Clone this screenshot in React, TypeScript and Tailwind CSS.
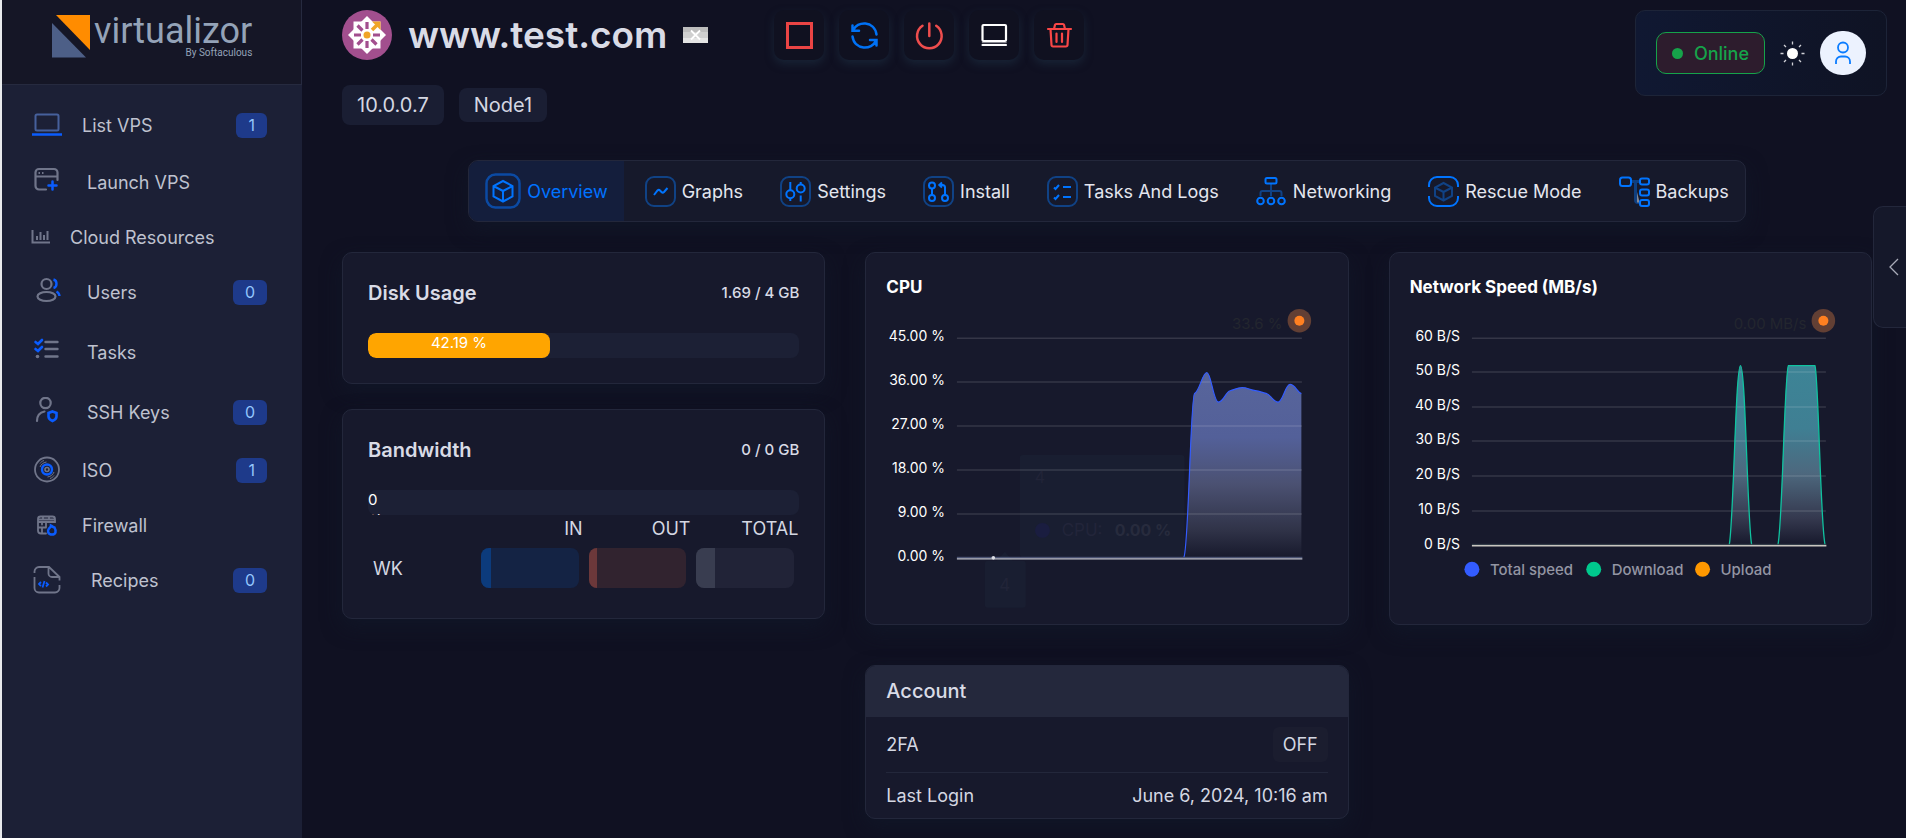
// App.tsx
// VPS detail page: sidebar, power controls, section tabs and the overview cards.

import { useState, type ReactNode } from 'react';
import clsx from 'clsx';

interface NavItem {
  label: string;
  height: string;
  gap: string;
  count?: number;
  icon: ReactNode;
}

const GREY = '#70758a';
const BLUE = '#0a5cff';

const NAV_ITEMS: NavItem[] = [
  {
    label: 'List VPS',
    height: 'h-14',
    gap: 'pl-5',
    count: 1,
    icon: (
      <>
        <rect x="5.5" y="4.5" width="23" height="16" rx="1.5" stroke="#46609c" strokeWidth="2" />
        <path d="M2 24.5h30" stroke={BLUE} strokeWidth="2.5" />
      </>
    ),
  },
  {
    label: 'Launch VPS',
    height: 'h-[58px]',
    gap: 'pl-[25px]',
    icon: (
      <>
        <path
          d="M16 22.5H9a3.5 3.5 0 0 1-3.5-3.5V5.5A3.5 3.5 0 0 1 9 2h15a3.5 3.5 0 0 1 3.5 3.5V13M5.5 9.5h22"
          stroke={GREY}
          strokeWidth="2.2"
          strokeLinecap="round"
        />
        <path d="M8.5 6h1.5M12 6h1.5" stroke={GREY} strokeWidth="2" />
        <path d="M22.5 14.5v8M18.5 18.5h8" stroke={BLUE} strokeWidth="2.5" strokeLinecap="round" />
      </>
    ),
  },
  {
    label: 'Cloud Resources',
    height: 'h-13',
    gap: 'pl-2',
    icon: (
      <path d="M2.5 8v12.5h17.5M7 14v4M10.500 10v8M14 13v5M17.5 9v9" stroke={GREY} strokeWidth="2" />
    ),
  },
  {
    label: 'Users',
    height: 'h-[58px]',
    gap: 'pl-[25px]',
    count: 0,
    icon: (
      <>
        <circle cx="16.5" cy="7" r="5" stroke={GREY} strokeWidth="2.2" />
        <ellipse cx="16.5" cy="19.5" rx="9" ry="4.5" stroke={GREY} strokeWidth="2.2" />
        <path d="M23.5 2.5c4 1 4 7.5 0 8.5M26.5 14.5c2 1 2.8 2.5 3 4.5" stroke={BLUE} strokeWidth="2.4" />
      </>
    ),
  },
  {
    label: 'Tasks',
    height: 'h-[62px]',
    gap: 'pl-[25px]',
    icon: (
      <>
        <path d="M15.5 5h12M15.5 12h12M15.5 19.5h12" stroke={GREY} strokeWidth="2.4" strokeLinecap="round" />
        <circle cx="7.5" cy="19.5" r="1.8" fill={GREY} />
        <path d="M5.5 5l2.5 2 4-4M5.500 12l2.500 2 4-4" stroke={BLUE} strokeWidth="2.6" strokeLinecap="round" />
      </>
    ),
  },
  {
    label: 'SSH Keys',
    height: 'h-[58px]',
    gap: 'pl-[25px]',
    count: 0,
    icon: (
      <>
        <circle cx="15.5" cy="6" r="5.2" stroke={GREY} strokeWidth="2.2" />
        <path d="M7 24c0-5.5 2.5-8.500 7.500-9.500" stroke={GREY} strokeWidth="2.2" strokeLinecap="round" />
        <path d="M22.5 14.5l4 1.5v3.5c0 2-1.5 3.5-4 4.5-2.5-1-4-2.5-4-4.5V16z" stroke={BLUE} strokeWidth="2.6" />
      </>
    ),
  },
  {
    label: 'ISO',
    height: 'h-[58px]',
    gap: 'pl-5',
    count: 1,
    icon: (
      <>
        <circle cx="17" cy="14.5" r="12" stroke={GREY} strokeWidth="1.8" />
        <circle cx="17" cy="14.5" r="5" stroke={BLUE} strokeWidth="2.4" />
        <circle cx="17" cy="14.5" r="2" stroke={GREY} strokeWidth="1.6" />
        <path
          d="M10 12c1-2.500 3-4.500 6.500-5M10 8.500c1-1.500 2-2.300 4-3M24 17c-1 2.500-3 4.500-6.500 5M24 20.500c-1 1.500-2 2.300-4 3"
          stroke={GREY}
        />
      </>
    ),
  },
  {
    label: 'Firewall',
    height: 'h-13',
    gap: 'pl-5',
    icon: (
      <>
        <path
          d="M16 23.5h-5a3 3 0 0 1-3-3V9a2.500 2.500 0 0 1 2.500-2.500h12A2.500 2.500 0 0 1 25 9v3H8M13 6.500v2.500M19 6.500v2.500M8 9.500h17M16 12v5M8 17.500h8M12 17.500v5M12 13v1.500"
          stroke={GREY}
          strokeWidth="1.8"
          strokeLinecap="round"
        />
        <path d="M21 15.5c2 1 2 2 3.5 2 2 3.5 1.5 7-2.5 7s-5-3.500-3-6c1-.8 2-1.500 2-3z" stroke={BLUE} strokeWidth="2.5" />
      </>
    ),
  },
  {
    label: 'Recipes',
    height: 'h-[58px]',
    gap: 'pl-[29px]',
    count: 0,
    icon: (
      <>
        <path
          d="M4.5 8V6.5a4.5 4.5 0 0 1 4.5-4.500h10l10.500 10v3.500M29.500 20v3a4.500 4.500 0 0 1-4.500 4.500H9a4.500 4.500 0 0 1-4.500-4.500V12M18.500 2.500v6a3.500 3.500 0 0 0 3.500 3.500h7"
          stroke={GREY}
          strokeWidth="1.8"
        />
        <path d="M11 17l-2 2 2 2M16 17.500l2 2-2 2M14.500 16l-2 6.500" stroke={BLUE} strokeWidth="1.8" />
      </>
    ),
  },
];

const POWER_ACTIONS: { label: string; color: string; icon: ReactNode }[] = [
  { label: 'Stop', color: 'text-[#ea4444]', icon: <rect x="3.5" y="3.5" width="24" height="24" strokeWidth="3" /> },
  {
    label: 'Restart',
    color: 'text-[#0072f5]',
    icon: (
      <>
        <path d="M3.500 5.500v5.300h6.500M4 10.500C8 .5 25.500.5 27.500 14.500" strokeWidth="2.5" />
        <path d="M27.500 25.500v-5.500h-6.500M27 20.500C23 30.500 5.500 30.500 3.500 16.500" strokeWidth="2.5" />
      </>
    ),
  },
  {
    label: 'Power off',
    color: 'text-[#ee4d4d]',
    icon: <path d="M15.300 3.500v12.500M8.500 5.800a12.300 12.300 0 1 0 13.700 0" strokeWidth="2.5" />,
  },
  {
    label: 'Console',
    color: 'text-white',
    icon: (
      <>
        <rect x="3.5" y="5" width="23.5" height="16" rx="1" strokeWidth="2.2" />
        <path d="M3.500 25h23.500" strokeWidth="2.2" />
        <path d="M3.500 22.500h23.500" strokeWidth="1.5" opacity="0.5" />
      </>
    ),
  },
  {
    label: 'Delete',
    color: 'text-[#f94646]',
    icon: (
      <path
        d="M4 9h23M6.500 9l1 16a1.500 1.500 0 0 0 1.500 1.500h13a1.500 1.500 0 0 0 1.500-1.500l1-16M10 9l1-4.200a1.200 1.200 0 0 1 1.200-.8h6.600a1.200 1.200 0 0 1 1.200.8L21 9M12.500 13.500v8.500M18 13.500v8.500"
        strokeWidth="2.2"
      />
    ),
  },
];

const FRAME = <rect x="1" y="1" width="29" height="29" rx="8" stroke="#104285" strokeWidth="2" />;

const TABS: { label: string; icon: ReactNode; size?: number }[] = [
  {
    label: 'Overview',
    size: 36,
    icon: (
      <>
        <rect x="1.5" y="1.5" width="33" height="33" rx="9" stroke="#0b4aa3" strokeWidth="2.5" />
        <path d="M18 8l9.500 5v10.500L18 28.500l-9.500-5V13zM8.500 13L18 18l9.500-5M18 18v10.500" />
      </>
    ),
  },
  {
    label: 'Graphs',
    icon: (
      <>
        {FRAME}
        <path d="M9 19l3.500-4.500c1-1 1.500-1 2.500 0l1.500 1.500c1 1 1.500 1 2.500 0L22.500 12" />
      </>
    ),
  },
  {
    label: 'Settings',
    icon: (
      <>
        {FRAME}
        <path d="M10.300 6v8M10.300 22.500v2.500M20.700 6v3M20.700 19.500v6" />
        <circle cx="10.3" cy="18.3" r="4" />
        <circle cx="20.7" cy="12.5" r="4" />
      </>
    ),
  },
  {
    label: 'Install',
    icon: (
      <>
        {FRAME}
        <circle cx="9" cy="9.5" r="3" />
        <circle cx="9" cy="22" r="3" />
        <circle cx="22" cy="22" r="3" />
        <path d="M9 12.500v6.500M22 19v-7.500a2.500 2.500 0 0 0-2.500-2.500H16.500M19 6.500L16.300 9l2.700 2.500" />
      </>
    ),
  },
  {
    label: 'Tasks And Logs',
    icon: (
      <>
        {FRAME}
        <path d="M7 11.500l1.500 1.500 3.500-4M7 21.500l1.500 1.500 3.500-4M16 11h8M16 21h8" />
      </>
    ),
  },
  {
    label: 'Networking',
    icon: (
      <>
        <path d="M4.500 20v-3a2 2 0 0 1 2-2h17a2 2 0 0 1 2 2v3M15 8v12" stroke="#104285" />
        <rect x="9.5" y="2" width="11" height="5.5" rx="1.5" />
        <circle cx="4.5" cy="25" r="3.3" />
        <circle cx="15" cy="25" r="3.3" />
        <circle cx="25.5" cy="25" r="3.3" />
      </>
    ),
  },
  {
    label: 'Rescue Mode',
    icon: (
      <>
        <path d="M1 11V9a8 8 0 0 1 8-8h13a8 8 0 0 1 8 8v2M30 20v2a8 8 0 0 1-8 8H9a8 8 0 0 1-8-8v-2" />
        <path
          d="M15.500 7l8.500 4.500v8.500L15.500 24.500 7 20v-8.500zM7 11.500l8.500 4.500 8.500-4.500M15.500 16v8.500"
          stroke="#104285"
        />
      </>
    ),
  },
  {
    label: 'Backups',
    icon: (
      <>
        <path d="M12 5.500h8M16.500 5.500v18.500a2.500 2.500 0 0 0 2.500 2.500h1.500" stroke="#0f3f80" strokeWidth="3" />
        <path d="M18 16l2 8v2.500h-2z" fill="#858894" stroke="none" />
        <rect x="1" y="1.5" width="11" height="8.5" rx="2.5" />
        <rect x="21" y="2.5" width="9" height="6" rx="2" />
        <rect x="21" y="13.5" width="9" height="6" rx="2" />
        <rect x="21" y="24" width="9" height="6" rx="2" />
      </>
    ),
  },
];

const TRAFFIC = [
  { label: 'IN', track: 'bg-[#142344]', fill: 'bg-[#0c3b7c]', percent: 10 },
  { label: 'OUT', track: 'bg-[#31232f]', fill: 'bg-[#6c383a]', percent: 9 },
  { label: 'TOTAL', track: 'bg-[#212337]', fill: 'bg-[#393d50]', percent: 19 },
];

const CPU_TICKS = [
  { label: '45.00 %', y: 38 },
  { label: '36.00 %', y: 82 },
  { label: '27.00 %', y: 126 },
  { label: '18.00 %', y: 170 },
  { label: '9.00 %', y: 214 },
  { label: '0.00 %', y: 258 },
];

const NETWORK_TICKS = [
  { label: '60 B/S', y: 38 },
  { label: '50 B/S', y: 72 },
  { label: '40 B/S', y: 107 },
  { label: '30 B/S', y: 141 },
  { label: '20 B/S', y: 176 },
  { label: '10 B/S', y: 211 },
  { label: '0 B/S', y: 246 },
];

const LEGEND = [
  { label: 'Total speed', color: '#335cff', x: 62 },
  { label: 'Download', color: '#00c98d', x: 184 },
  { label: 'Upload', color: '#ff9800', x: 293 },
];

const CPU_LINE =
  'M298.3 257.5C303 250 305 96 309 93.500C314 91 317 72.500 321.300 72.500S328 102 333 102S340 92 344.700 90.700S352 87.500 356.700 87.500S364 89.500 368.700 90.300S376 92 380.700 93.300S388 102 392.700 102S400 84.300 404.700 84.300S412 92 416 93.500';
const NETWORK_LINE =
  'M319.7 245C324 225 326 65.500 331 65.500S338 225 342.200 245M368.500 245C373 225 375 72 379 65.500H405.500C409 72 411 225 415.700 245';

function Card({ className, children }: { className?: string; children: ReactNode }) {
  return (
    <section
      className={clsx(
        'rounded-[10px] border border-[#23273b] bg-[#17192c] shadow-[0_8px_20px_rgba(17,24,42,0.7)]',
        className
      )}
    >
      {children}
    </section>
  );
}

function Sidebar() {
  return (
    <aside className="w-[302px] shrink-0 border-l-2 border-[#e8eaed] bg-[#1c2036]">
      <div className="flex h-[85px] items-start border-r border-b border-[#262a3f] bg-[#151626] pt-[10px] pl-[50px]">
        <svg width="40" height="48" viewBox="0 0 40 48" className="shrink-0">
          <path d="M4 5h34v35z" fill="#ff8c00" />
          <path d="M0 13l34 34.500H0z" fill="#4d5f87" />
        </svg>
        <div className="flex flex-col pt-[2px] font-[Roboto,sans-serif] text-[#94a3b8]">
          <span className="pl-[2px] text-[36px] leading-[38px]">virtualizor</span>
          <span className="text-right text-[10px] leading-[6px]">By Softaculous</span>
        </div>
      </div>
      <nav className="flex flex-col pt-3 pr-[35px] pl-7">
        {NAV_ITEMS.map((item) => (
          <a key={item.label} href="#" className={clsx('flex items-center', item.height)}>
            <svg width="32" height="30" viewBox="0 0 32 30" fill="none" className="shrink-0">
              {item.icon}
            </svg>
            <span className={clsx('flex-1 text-[18px] text-[#bfc2cf]', item.gap)}>{item.label}</span>
            {item.count !== undefined && (
              <span className="rounded-md bg-[#1e3a8a] px-3 text-[16px] leading-[25px] text-[#93c5fd]">{item.count}</span>
            )}
          </a>
        ))}
      </nav>
    </aside>
  );
}

function OsLogo() {
  return (
    <svg width="50" height="50" viewBox="0 0 50 50" className="shrink-0">
      <circle cx="25" cy="25" r="25" fill="#a24f8e" />
      <path d="M11.500 11.500h27v27h-27z" fill="#fff" />
      <path d="M25 6l19 19-19 19L6 25z" fill="#fff" />
      <path d="M30 11.500h8.500V20z" fill="#f0a527" />
      <path
        d="M19 25h-7M31 25h7M25 19v-7M25 31v7M20.500 20.500l-5-5M29.500 29.500l5 5M20.500 29.500l-5 5"
        stroke="#a24f8e"
        strokeWidth="3.2"
      />
      <path d="M30 20l5-5" stroke="#f0a527" strokeWidth="3.5" />
      <circle cx="25" cy="25" r="3.5" fill="#f0a527" />
    </svg>
  );
}

function Header() {
  return (
    <header className="flex items-start justify-between pt-[10px] pr-[19px] pl-10">
      <div>
        <div className="flex items-center">
          <OsLogo />
          <h1 className="pl-4 text-[37px] leading-[50px] font-semibold text-[#d9dbe6]">www.test.com</h1>
          <svg width="25" height="16" viewBox="0 0 25 16" className="ml-4 shrink-0">
            <path d="M0 0h25v5H0z" fill="#bdbdbd" />
            <path d="M0 5h25v6H0z" fill="#cfcfcf" />
            <path d="M0 11h25v5H0z" fill="#e4e4e4" />
            <path d="M8 3.500l9 9M17 3.500l-9 9" stroke="#fff" strokeWidth="1.8" />
          </svg>
          <div className="flex gap-[15px] pl-[66px]">
            {POWER_ACTIONS.map((action) => (
              <button
                key={action.label}
                type="button"
                aria-label={action.label}
                className={clsx(
                  'size-[50px] rounded-[10px] bg-[#101120] p-[10px] shadow-[0_4px_8px_rgba(30,48,66,0.6)]',
                  action.color
                )}
              >
                <svg
                  width="30"
                  height="30"
                  viewBox="0 0 30 30"
                  fill="none"
                  stroke="currentColor"
                  strokeLinecap="round"
                >
                  {action.icon}
                </svg>
              </button>
            ))}
          </div>
        </div>
        <div className="flex items-center gap-[15px] pt-[25px] text-[20px] text-[#d4d7e2]">
          <span className="rounded-lg bg-[#1a1e33] px-[15px] leading-[40px]">10.0.0.7</span>
          <span className="rounded-lg bg-[#1a1e33] px-[15px] leading-[34px]">Node1</span>
        </div>
      </div>

      <div className="flex h-[86px] items-center rounded-[10px] border border-[#1d2438] bg-linear-to-r from-[#101832] to-[#0f1324] px-5">
        <button
          type="button"
          className="flex h-[42px] items-center gap-[11px] rounded-[10px] border border-[#16a34a] bg-[#2d1c2d] px-[15px] text-[18px] font-medium text-[#16a34a]"
        >
          <span className="size-[11px] rounded-full bg-[#16a34a]" />
          Online
        </button>
        <button type="button" aria-label="Toggle theme" className="mx-[15px]">
          <svg width="25" height="25" viewBox="0 0 25 25" stroke="#cfd0d6" strokeWidth="1.3">
            <circle cx="12.5" cy="12.5" r="5.5" fill="#fff" stroke="none" />
            <path d="M12.500 0.500v3M12.500 21.500v3M.5 12.500h3M21.500 12.500h3M4 4l2 2M19 19l2 2M4 21l2-2M19 6l2-2" />
          </svg>
        </button>
        <button type="button" aria-label="Profile" className="flex h-11 w-[46px] items-center justify-center rounded-full bg-[#ecf2fe]">
          <svg width="18" height="24" viewBox="0 0 18 24" fill="none" stroke="#0a7cff" strokeWidth="1.8">
            <circle cx="9" cy="6.5" r="5" />
            <path d="M2 23v-2.500a5 5 0 0 1 5-5h4a5 5 0 0 1 5 5V23" />
          </svg>
        </button>
      </div>
    </header>
  );
}

function Tabs() {
  const [active, setActive] = useState('Overview');

  return (
    <nav className="flex h-[62px] overflow-hidden rounded-[10px] border border-[#23273b] bg-[#16192b] shadow-[0_8px_20px_rgba(17,24,42,0.7)]">
      {TABS.map((tab) => (
        <button
          key={tab.label}
          type="button"
          onClick={() => setActive(tab.label)}
          className={clsx(
            'flex items-center gap-1.5 px-4 text-[18px] whitespace-nowrap',
            active === tab.label ? 'bg-[#141e3c] text-[#0072ff]' : 'text-[#e4e6ef]'
          )}
        >
          <span className="flex w-9 justify-end">
            <svg
              width={tab.size ?? 31}
              height={tab.size ?? 31}
              viewBox={tab.size ? '0 0 36 36' : '0 0 31 31'}
              fill="none"
              stroke="#0074ff"
              strokeWidth="2"
            >
              {tab.icon}
            </svg>
          </span>
          {tab.label}
        </button>
      ))}
    </nav>
  );
}

function UsageHeading({ title, value }: { title: string; value: string }) {
  return (
    <div className="flex h-[30px] items-center justify-between">
      <h2 className="text-[20px] font-semibold text-[#d9dbe6]">{title}</h2>
      <span className="text-[15px] font-medium text-[#d9dbe6]">{value}</span>
    </div>
  );
}

function UsageBar({ percent }: { percent: number }) {
  return (
    <div className="mt-[25px] h-[25px] overflow-hidden rounded-lg bg-[#1c2035]">
      <div
        className="h-full rounded-lg bg-[#ffa500] text-center text-[15px] leading-5 text-white"
        style={{ width: `${percent}%` }}
      >
        {percent} %
      </div>
    </div>
  );
}

function BandwidthTable() {
  return (
    <table className="w-full table-fixed text-[18px] text-[#d4d7e2]">
      <thead>
        <tr className="h-7">
          <td />
          {TRAFFIC.map((col) => (
            <th key={col.label} scope="col" className="p-0 pr-px text-right leading-7 font-normal">
              {col.label}
            </th>
          ))}
        </tr>
      </thead>
      <tbody>
        <tr>
          <th scope="row" className="p-[5px] text-left font-normal">
            WK
          </th>
          {TRAFFIC.map((col) => (
            <td key={col.label} className="p-[5px]">
              <div className={clsx('h-10 overflow-hidden rounded-lg', col.track)}>
                <div className={clsx('h-full', col.fill)} style={{ width: `${col.percent}%` }} />
              </div>
            </td>
          ))}
        </tr>
      </tbody>
    </table>
  );
}

function LiveMarker({ label }: { label: string }) {
  return (
    <>
      <text x="397" y="29" textAnchor="end" fill="#23262f" className="text-[15px]">
        {label}
      </text>
      <circle cx="414" cy="20.5" r="11.8" fill="#623f34" />
      <circle cx="414" cy="20.5" r="5" fill="#ff8021" />
    </>
  );
}

function Grid({ ticks, left }: { ticks: { label: string; y: number }[]; left: number }) {
  return (
    <>
      {ticks.map((tick, i) => (
        <g key={tick.label}>
          {i < ticks.length - 1 && (
            <path d={`M${left} ${tick.y}H416.500`} stroke="#fff" strokeOpacity="0.13" strokeWidth="1.5" />
          )}
          <text x={left - 12} y={tick.y + 3} textAnchor="end" fill="#fff" className="text-[14px]">
            {tick.label}
          </text>
        </g>
      ))}
    </>
  );
}

function CpuChart() {
  return (
    <svg width="442" height="304" viewBox="0 0 442 304" fill="none" className="max-w-full overflow-visible">
      <defs>
        <linearGradient id="cpuFill" x1="0" y1="0" x2="0" y2="1">
          <stop offset="0" stopColor="#58659b" />
          <stop offset="0.35" stopColor="#536099" />
          <stop offset="0.6" stopColor="#4b5172" />
          <stop offset="0.85" stopColor="#303348" />
          <stop offset="1" stopColor="#17192c" />
        </linearGradient>
      </defs>

      {/* fading tooltip */}
      <rect x="134" y="155" width="165" height="102" rx="3" fill="#191e31" />
      <text x="149" y="183" fill="#212438" className="text-[16px]">4</text>
      <circle cx="156.7" cy="230.5" r="7.5" fill="#1a1d40" />
      <text x="176" y="236" fill="#22253a" className="text-[17px]">CPU:</text>
      <text x="229" y="236" fill="#272b3d" className="text-[16px] font-bold">0.00 %</text>
      <path d="M111 261l8-9 8 9z" fill="#191e31" />
      <rect x="99" y="261" width="41" height="47" rx="3" fill="#191e31" />
      <text x="119" y="291" textAnchor="middle" fill="#212438" className="text-[17px]">4</text>

      <path d={`${CPU_LINE}V258H298z`} fill="url(#cpuFill)" />
      <Grid ticks={CPU_TICKS} left={71} />
      <path d={CPU_LINE} stroke="#335cff" strokeWidth="1.2" />
      <LiveMarker label="33.6 %" />
      <path d="M71 257.500H417" stroke="#566083" strokeWidth="1" />
      <path d="M71 259H417" stroke="#c3c5d0" strokeWidth="1.3" />
      <circle cx="107.5" cy="258" r="1.8" fill="#dcdde4" />
    </svg>
  );
}

function NetworkChart() {
  return (
    <svg width="442" height="304" viewBox="0 0 442 304" fill="none" className="max-w-full overflow-visible">
      <defs>
        <linearGradient id="networkFill" x1="0" y1="0" x2="0" y2="1">
          <stop offset="0" stopColor="#3d8496" />
          <stop offset="0.35" stopColor="#3f7f93" />
          <stop offset="0.6" stopColor="#4d687e" />
          <stop offset="0.85" stopColor="#35394f" />
          <stop offset="1" stopColor="#17192c" />
        </linearGradient>
      </defs>
      <path d={NETWORK_LINE} fill="url(#networkFill)" />
      <Grid ticks={NETWORK_TICKS} left={62} />
      <path d={NETWORK_LINE} stroke="#10c3a0" strokeWidth="1.3" />
      <LiveMarker label="0.00 MB/s" />
      <path d="M62 244.500H417" stroke="#39454f" />
      <path d="M62 246H417" stroke="#c9c6c0" strokeWidth="1.5" />
      {LEGEND.map((entry) => (
        <g key={entry.label}>
          <circle cx={entry.x} cy="269.5" r="7.5" fill={entry.color} />
          <text x={entry.x + 18} y="275" fill="#9395a3" className="text-[15px] font-medium">
            {entry.label}
          </text>
        </g>
      ))}
    </svg>
  );
}

function ChartCard({ title, children }: { title: string; children: ReactNode }) {
  return (
    <Card className="p-5">
      <h2 className="pt-[2px] text-[17px] leading-[25px] font-bold text-white">{title}</h2>
      {children}
    </Card>
  );
}

function AccountCard() {
  return (
    <Card>
      <h2 className="rounded-t-[9px] bg-[#24283c] px-5 text-[20px] leading-[51px] font-medium text-[#d9dbe6]">Account</h2>
      <dl className="px-5 text-[18px] text-[#d4d7e2]">
        <div className="flex h-14 items-center justify-between border-b border-[#23273b]">
          <dt>2FA</dt>
          <dd className="rounded-md bg-[#1b1d2f] px-[10px] leading-[35px]">OFF</dd>
        </div>
        <div className="flex h-[45px] items-center justify-between">
          <dt>Last Login</dt>
          <dd>June 6, 2024, 10:16 am</dd>
        </div>
      </dl>
    </Card>
  );
}

export default function App() {
  return (
    <div className="flex min-h-screen bg-[#101122] font-[Inter,sans-serif]">
      <Sidebar />
      <div className="relative min-w-0 flex-1">
        <Header />
        <main className="flex flex-col pr-[34px] pb-4 pl-10">
          <div className="flex justify-center pt-[35px]">
            <Tabs />
          </div>
          <div className="grid grid-cols-3 items-start gap-10 pt-[30px]">
            <div className="flex flex-col gap-[25px]">
              <Card className="p-[25px]">
                <UsageHeading title="Disk Usage" value="1.69 / 4 GB" />
                <UsageBar percent={42.19} />
              </Card>
              <Card className="p-[25px]">
                <UsageHeading title="Bandwidth" value="0 / 0 GB" />
                <UsageBar percent={0} />
                <BandwidthTable />
              </Card>
            </div>
            <div className="flex flex-col gap-10">
              <ChartCard title="CPU">
                <CpuChart />
              </ChartCard>
              <AccountCard />
            </div>
            <ChartCard title="Network Speed (MB/s)">
              <NetworkChart />
            </ChartCard>
          </div>
        </main>
        <button
          type="button"
          aria-label="Open side panel"
          className="absolute top-[206px] right-0 flex h-[122px] w-[33px] items-center justify-center rounded-l-[10px] border border-r-0 border-[#23273b] bg-[#15182a] pl-2"
        >
          <svg width="10" height="18" viewBox="0 0 10 18" fill="none" stroke="#a9abb8" strokeWidth="1.3">
            <path d="M9 1L1 9l8 8" />
          </svg>
        </button>
      </div>
    </div>
  );
}
